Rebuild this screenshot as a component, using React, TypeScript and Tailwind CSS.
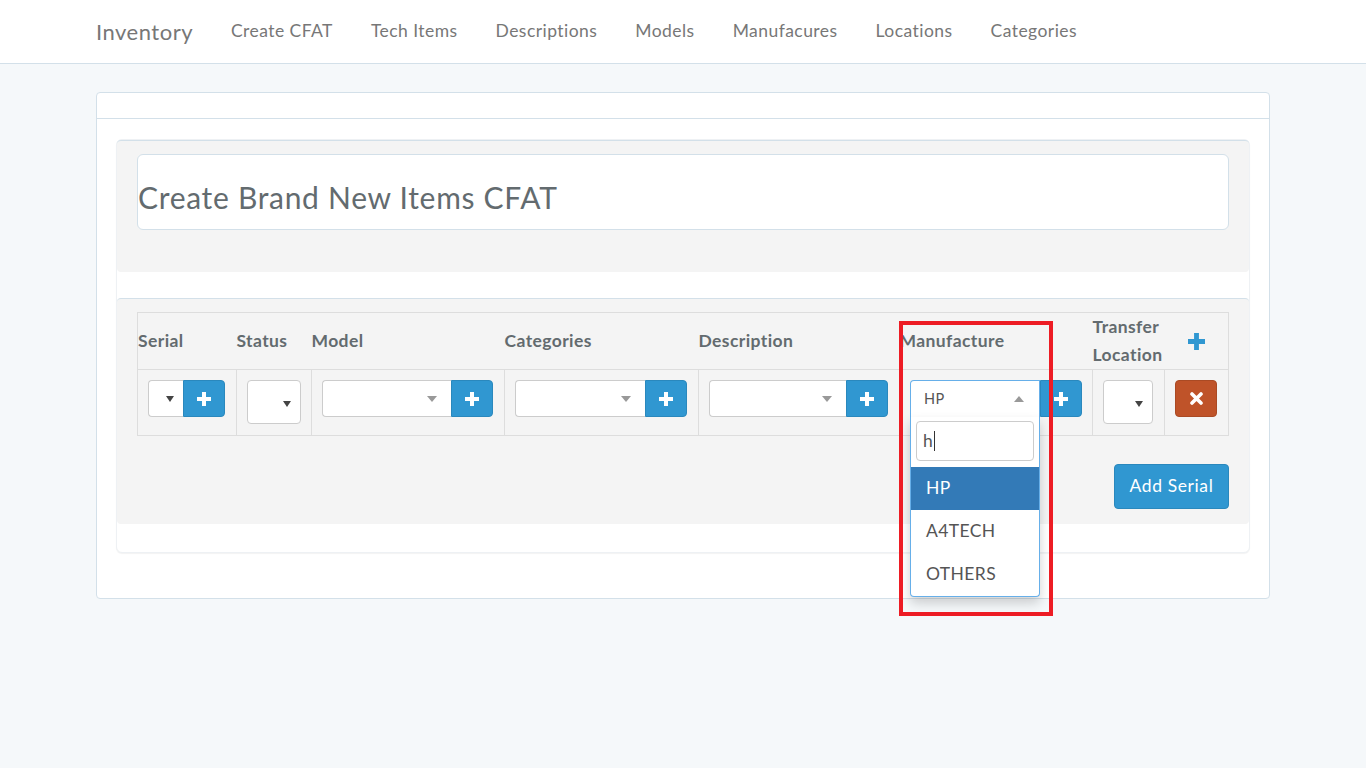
import React from 'react';

const font = { fontFamily: 'Lato, "Open Sans", sans-serif' };

const PlusIcon: React.FC<{ size?: number; color?: string }> = ({ size = 14, color = '#fff' }) => (
  <svg width={size} height={size} viewBox="0 0 14 14">
    <path d="M5 0h4v5h5v4H9v5H5V9H0V5h5z" fill={color} />
  </svg>
);

const TimesIcon: React.FC = () => (
  <svg width="13" height="13" viewBox="0 0 13 13">
    <path d="M2 2L11 11M11 2L2 11" stroke="#fff" strokeWidth="3.6" strokeLinecap="round" />
  </svg>
);

const NativeArrow: React.FC = () => (
  <svg width="8" height="6" viewBox="0 0 8 6">
    <path d="M0 0h8L4 6z" fill="#444" />
  </svg>
);

const Select2Caret: React.FC<{ up?: boolean }> = ({ up }) => (
  <svg width="10" height="6" viewBox="0 0 10 6">
    {up ? <path d="M0 6h10L5 0z" fill="#999" /> : <path d="M0 0h10L5 6z" fill="#999" />}
  </svg>
);

const AddButton: React.FC = () => (
  <button className="w-[42px] h-[37px] bg-[#3097d1] border border-[#2a88bd] rounded-r-[4px] flex items-center justify-center">
    <PlusIcon />
  </button>
);

const Select2Group: React.FC<{ w: string }> = ({ w }) => (
  <div className="flex">
    <div className={`${w} h-[37px] bg-white border border-[#ccc] border-r-0 rounded-l-[4px] flex items-center justify-end pr-[14px]`}>
      <Select2Caret />
    </div>
    <AddButton />
  </div>
);

const navLinks = ['Create CFAT', 'Tech Items', 'Descriptions', 'Models', 'Manufacures', 'Locations', 'Categories'];

const App: React.FC = () => {
  return (
    <div className="relative min-h-[768px] bg-[#f5f8fa] text-[#636b6f] tracking-[0.4px]" style={font}>
      <nav className="h-[64px] bg-white border-b border-[#d3e0e9]">
        <div className="w-[1174px] mx-auto flex items-center h-full">
          <a className="text-[22px] text-[#777] pr-[19px] leading-[30px] tracking-[0.5px]">Inventory</a>
          {navLinks.map(l => (
            <a key={l} className="px-[19px] text-[17.5px] text-[#777] leading-[26px] pb-[1px] tracking-[0.45px]">{l}</a>
          ))}
        </div>
      </nav>

      <div className="w-[1174px] mx-auto mt-[28px] bg-white border border-[#d3e0e9] rounded-[4px]">
        <div className="h-[26px] border-b border-[#d3e0e9]" />
        <div className="px-[19px] pt-[20px] pb-[45px]">
          <div className="bg-white border border-[#eef1f4] rounded-[6px] shadow-[0_1px_1px_rgba(0,0,0,0.05)] pb-[28px]">
            {/* title well */}
            <div className="bg-[#f4f4f4] border-t border-[#d3e0e9] rounded-[4px] px-[20px] pt-[13px] pb-[42px]">
              <div className="h-[76px] bg-white border border-[#d3e0e9] rounded-[6px] flex items-center pt-[10px]">
                <h2 className="text-[30px] leading-[36px] text-[#636b6f] tracking-[0.7px]">Create Brand New Items CFAT</h2>
              </div>
            </div>

            <div className="h-[26px]" />

            {/* items well */}
            <div className="bg-[#f4f4f4] border-t border-[#d3e0e9] rounded-[4px] px-[20px] pt-[13px] pb-[15px]">
              <table className="w-[1091px] table-fixed border-collapse">
                <colgroup>
                  <col className="w-[99px]" />
                  <col className="w-[75px]" />
                  <col className="w-[193px]" />
                  <col className="w-[194px]" />
                  <col className="w-[201px]" />
                  <col className="w-[193px]" />
                  <col className="w-[72px]" />
                  <col className="w-[64px]" />
                </colgroup>
                <thead>
                  <tr className="h-[57px]">
                    {['Serial', 'Status', 'Model', 'Categories', 'Description', 'Manufacture'].map(h => (
                      <th key={h} className="border-y border-[#ddd] first:border-l p-0 text-left align-middle font-bold text-[17.5px] leading-[28px] text-[#636b6f]">{h}</th>
                    ))}
                    <th className="border-y border-[#ddd] p-0 text-left align-middle font-bold text-[17.5px] leading-[28px] text-[#636b6f]">Transfer Location</th>
                    <th className="border-y border-r border-[#ddd] p-0 align-middle">
                      <div className="flex justify-center">
                        <PlusIcon size={17} color="#3097d1" />
                      </div>
                    </th>
                  </tr>
                </thead>
                <tbody>
                  <tr className="h-[66px]">
                    <td className="border border-[#ddd] px-[10px] pt-[10px] pb-[10px] align-top">
                      <div className="flex">
                        <div className="w-[35px] h-[37px] bg-white border border-[#ccc] border-r-0 rounded-l-[4px] flex items-center justify-end pr-[9px]">
                          <NativeArrow />
                        </div>
                        <AddButton />
                      </div>
                    </td>
                    <td className="border border-[#ddd] px-[10px] pt-[10px] pb-[10px] align-top">
                      <div className="w-[54px] h-[44px] bg-white border border-[#ccc] rounded-[4px] flex items-center justify-end pr-[9px] pt-[3px]">
                        <NativeArrow />
                      </div>
                    </td>
                    <td className="border border-[#ddd] px-[10px] pt-[10px] pb-[10px] align-top">
                      <Select2Group w="w-[129px]" />
                    </td>
                    <td className="border border-[#ddd] px-[10px] pt-[10px] pb-[10px] align-top">
                      <Select2Group w="w-[130px]" />
                    </td>
                    <td className="border border-[#ddd] px-[10px] pt-[10px] pb-[10px] align-top">
                      <Select2Group w="w-[137px]" />
                    </td>
                    <td className="border border-[#ddd] px-[10px] pt-[10px] pb-[10px] align-top relative">
                      <div className="flex">
                        <div className="w-[130px] h-[37px] bg-white border border-[#66afe9] border-b-0 rounded-tl-[4px] flex items-center justify-between pl-[13px] pr-[15px] relative z-10">
                          <span className="text-[14.5px] text-[#555]">HP</span>
                          <Select2Caret up />
                        </div>
                        <AddButton />
                      </div>
                      {/* open dropdown */}
                      <div className="absolute left-[10px] top-[47px] w-[130px] bg-white border border-[#66afe9] border-t-0 rounded-b-[4px] shadow-[0_6px_12px_rgba(0,0,0,0.175)] z-20">
                        <div className="px-[5px] pt-[4px] pb-[6px]">
                          <div className="h-[40px] border border-[#ccc] rounded-[4px] flex items-center pl-[6px]">
                            <span className="text-[17.5px] text-[#555] leading-none">h</span>
                            <span className="w-[1px] h-[20px] bg-[#333] ml-[1px]" />
                          </div>
                        </div>
                        <div className="h-[43px] bg-[#337ab7] text-white text-[17.5px] flex items-center pl-[15px]">HP</div>
                        <div className="h-[43px] text-[#555] text-[17.5px] flex items-center pl-[15px]">A4TECH</div>
                        <div className="h-[43px] text-[#555] text-[17.5px] flex items-center pl-[15px]">OTHERS</div>
                      </div>
                    </td>
                    <td className="border border-[#ddd] px-[10px] pt-[10px] pb-[10px] align-top">
                      <div className="w-[50px] h-[44px] bg-white border border-[#ccc] rounded-[4px] flex items-center justify-end pr-[9px] pt-[3px]">
                        <NativeArrow />
                      </div>
                    </td>
                    <td className="border border-[#ddd] px-[10px] pt-[10px] pb-[10px] align-top">
                      <button className="w-[42px] h-[37px] bg-[#bf5329] border border-[#aa4a24] rounded-[4px] flex items-center justify-center">
                        <TimesIcon />
                      </button>
                    </td>
                  </tr>
                </tbody>
              </table>
              <div className="flex justify-end mt-[28px] w-[1092px]">
                <button className="w-[115px] h-[45px] bg-[#3097d1] border border-[#2a88bd] rounded-[4px] text-white text-[17.5px] tracking-[0.6px]">Add Serial</button>
              </div>
            </div>
          </div>
        </div>
      </div>

      {/* annotation box */}
      <div className="absolute left-[899px] top-[321px] w-[154px] h-[295px] border-[4px] border-[#ed1c24] pointer-events-none z-30" />
    </div>
  );
};

export default App;
